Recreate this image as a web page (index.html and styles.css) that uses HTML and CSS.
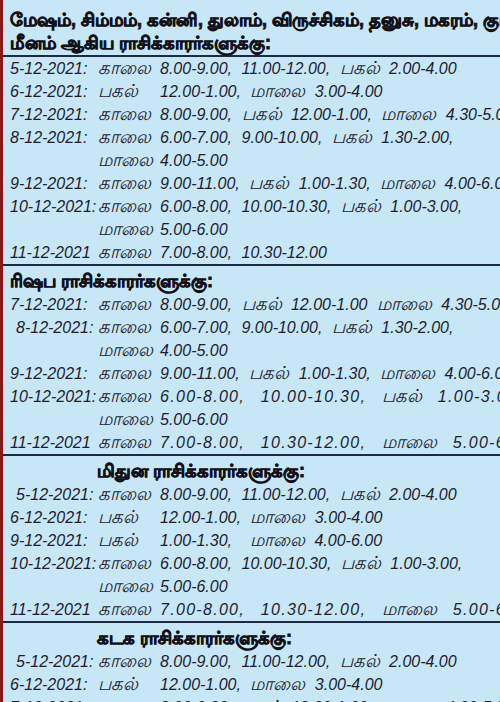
FILE: index.html
```html
<!DOCTYPE html>
<html lang="ta">
<head>
<meta charset="utf-8">
<title>ராசிக்காரர்களுக்கு</title>
<link rel="stylesheet" href="styles.css">
</head>
<body>
<div class="page">
  <section class="block">
    <h2 class="head head-first">மேஷம், சிம்மம், கன்னி, துலாம், விருச்சிகம், தனுசு, மகரம், கும்பம்,<br>மீனம் ஆகிய ராசிக்காரர்களுக்கு:</h2>
  </section>
  <section class="block">
    <div class="row"><span class="date">5-12-2021:</span><span class="lbl">காலை</span><span class="t">8.00-9.00, 11.00-12.00, <span class="ta">பகல்</span> 2.00-4.00</span></div>
    <div class="row"><span class="date">6-12-2021:</span><span class="lbl">பகல்</span><span class="t">12.00-1.00, <span class="ta">மாலை</span> 3.00-4.00</span></div>
    <div class="row"><span class="date">7-12-2021:</span><span class="lbl">காலை</span><span class="t">8.00-9.00, <span class="ta">பகல்</span> 12.00-1.00, <span class="ta">மாலை</span> 4.30-5.00</span></div>
    <div class="row"><span class="date">8-12-2021:</span><span class="lbl">காலை</span><span class="t">6.00-7.00, 9.00-10.00, <span class="ta">பகல்</span> 1.30-2.00,</span></div>
    <div class="row"><span class="date"></span><span class="lbl">மாலை</span><span class="t">4.00-5.00</span></div>
    <div class="row"><span class="date">9-12-2021:</span><span class="lbl">காலை</span><span class="t">9.00-11.00, <span class="ta">பகல்</span> 1.00-1.30, <span class="ta">மாலை</span> 4.00-6.00</span></div>
    <div class="row"><span class="date">10-12-2021:</span><span class="lbl">காலை</span><span class="t">6.00-8.00, 10.00-10.30, <span class="ta">பகல்</span> 1.00-3.00,</span></div>
    <div class="row"><span class="date"></span><span class="lbl">மாலை</span><span class="t">5.00-6.00</span></div>
    <div class="row"><span class="date">11-12-2021</span><span class="lbl">காலை</span><span class="t">7.00-8.00, 10.30-12.00</span></div>
  </section>

  <section class="block">
    <h2 class="head">ரிஷப ராசிக்காரர்களுக்கு:</h2>
    <div class="row"><span class="date">7-12-2021:</span><span class="lbl">காலை</span><span class="t">8.00-9.00, <span class="ta">பகல்</span> 12.00-1.00 <span class="ta">மாலை</span> 4.30-5.00</span></div>
    <div class="row"><span class="date indent">8-12-2021:</span><span class="lbl">காலை</span><span class="t">6.00-7.00, 9.00-10.00, <span class="ta">பகல்</span> 1.30-2.00,</span></div>
    <div class="row"><span class="date"></span><span class="lbl">மாலை</span><span class="t">4.00-5.00</span></div>
    <div class="row"><span class="date">9-12-2021:</span><span class="lbl">காலை</span><span class="t">9.00-11.00, <span class="ta">பகல்</span> 1.00-1.30, <span class="ta">மாலை</span> 4.00-6.00</span></div>
    <div class="row"><span class="date">10-12-2021:</span><span class="lbl">காலை</span><span class="t wide">6.00-8.00, 10.00-10.30, <span class="ta">பகல்</span> 1.00-3.00,</span></div>
    <div class="row"><span class="date"></span><span class="lbl">மாலை</span><span class="t">5.00-6.00</span></div>
    <div class="row"><span class="date">11-12-2021</span><span class="lbl">காலை</span><span class="t wide">7.00-8.00, 10.30-12.00, <span class="ta">மாலை</span> 5.00-6.00</span></div>
  </section>

  <section class="block">
    <h2 class="head center">மிதுன ராசிக்காரர்களுக்கு:</h2>
    <div class="row"><span class="date indent">5-12-2021:</span><span class="lbl">காலை</span><span class="t">8.00-9.00, 11.00-12.00, <span class="ta">பகல்</span> 2.00-4.00</span></div>
    <div class="row"><span class="date">6-12-2021:</span><span class="lbl">பகல்</span><span class="t">12.00-1.00, <span class="ta">மாலை</span> 3.00-4.00</span></div>
    <div class="row"><span class="date">9-12-2021:</span><span class="lbl">பகல்</span><span class="t"><span class="cell">1.00-1.30,</span><span class="ta">மாலை</span> 4.00-6.00</span></div>
    <div class="row"><span class="date">10-12-2021:</span><span class="lbl">காலை</span><span class="t">6.00-8.00, 10.00-10.30, <span class="ta">பகல்</span> 1.00-3.00,</span></div>
    <div class="row"><span class="date"></span><span class="lbl">மாலை</span><span class="t">5.00-6.00</span></div>
    <div class="row"><span class="date">11-12-2021</span><span class="lbl">காலை</span><span class="t wide">7.00-8.00, 10.30-12.00, <span class="ta">மாலை</span> 5.00-6.00</span></div>
  </section>

  <section class="block">
    <h2 class="head center">கடக ராசிக்காரர்களுக்கு:</h2>
    <div class="row"><span class="date indent">5-12-2021:</span><span class="lbl">காலை</span><span class="t">8.00-9.00, 11.00-12.00, <span class="ta">பகல்</span> 2.00-4.00</span></div>
    <div class="row"><span class="date">6-12-2021:</span><span class="lbl">பகல்</span><span class="t">12.00-1.00, <span class="ta">மாலை</span> 3.00-4.00</span></div>
    <div class="row"><span class="date">7-12-2021:</span><span class="lbl">காலை</span><span class="t">8.00-9.00, <span class="ta">பகல்</span> 12.00-1.00, <span class="ta">மாலை</span> 4.30-5.00</span></div>
  </section>
</div>
</body>
</html>
```

FILE: styles.css
```css
html, body {
  margin: 0;
  padding: 0;
  background: #c7e6f6;
}

.page {
  width: 497px;
  height: 702px;
  overflow: hidden;
  border-left: 3px solid #861b1f;
  background: #c7e6f6;
  color: #1b1d30;
  font-family: "Liberation Sans", sans-serif;
}

.block {
  border-bottom: 2px solid #1d2a44;
}

.head {
  margin: 0;
  padding: 4px 0 0 7px;
  font-size: 18px;
  line-height: 23px;
  font-weight: bold;
  white-space: nowrap;
  color: #111118;
  -webkit-text-stroke: 0.8px #111118;
}

.head-first {
  box-sizing: border-box;
  padding-top: 9px;
  height: 55px;
}

.head.center {
  padding-left: 94px;
}

.row {
  display: flex;
  height: 23px;
  line-height: 23px;
  font-size: 16px;
  font-style: italic;
  white-space: nowrap;
}

.date {
  flex: 0 0 88px;
  padding-left: 7px;
}

.date.indent {
  padding-left: 13px;
  flex-basis: 82px;
}

.lbl {
  flex: 0 0 62px;
  font-size: 18px;
}

.ta {
  font-size: 18px;
  letter-spacing: 0;
}

.t {
  word-spacing: 5px;
}

.t.wide {
  letter-spacing: 1.3px;
  word-spacing: 10px;
}

.cell {
  display: inline-block;
  width: 90px;
}
```
